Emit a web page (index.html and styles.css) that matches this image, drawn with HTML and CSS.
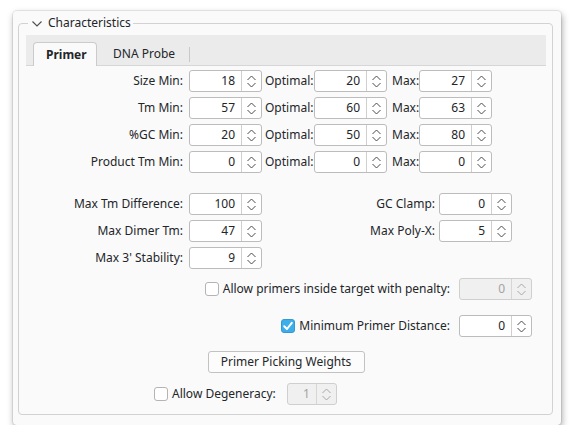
FILE: index.html
```html
<!DOCTYPE html>
<html>
<head>
<meta charset="utf-8">
<link rel="stylesheet" href="styles.css">
</head>
<body>
<svg class="defs" aria-hidden="true">
  <symbol id="ud" viewBox="0 0 9 13">
    <polyline points="0.5,5 4.5,1 8.5,5" fill="none" stroke="currentColor" stroke-width="1"/>
    <polyline points="0.5,8 4.5,12 8.5,8" fill="none" stroke="currentColor" stroke-width="1"/>
  </symbol>
</svg>
<div class="window">
  <fieldset class="group">
    <legend class="group-title"><svg class="chev" viewBox="0 0 10 6" width="10" height="6"><polyline points="0.5,0.5 5,5 9.5,0.5" fill="none" stroke="#4d4d4d" stroke-width="1.1"/></svg><span>Characteristics</span></legend>
    <div class="tabs">
      <div class="tabbar">
        <div class="tab active">Primer</div>
        <div class="tab">DNA Probe</div>
        <div class="tab-sep"></div>
      </div>
      <div class="pane">
        <div class="grid-a">
          <div class="lab">Size Min:</div>
          <div class="spin"><span class="val">18</span><span class="arr"><svg><use href="#ud"/></svg></span></div>
          <div class="lab-l">Optimal:</div>
          <div class="spin"><span class="val">20</span><span class="arr"><svg><use href="#ud"/></svg></span></div>
          <div class="lab-m">Max:</div>
          <div class="spin"><span class="val">27</span><span class="arr"><svg><use href="#ud"/></svg></span></div>

          <div class="lab">Tm Min:</div>
          <div class="spin"><span class="val">57</span><span class="arr"><svg><use href="#ud"/></svg></span></div>
          <div class="lab-l">Optimal:</div>
          <div class="spin"><span class="val">60</span><span class="arr"><svg><use href="#ud"/></svg></span></div>
          <div class="lab-m">Max:</div>
          <div class="spin"><span class="val">63</span><span class="arr"><svg><use href="#ud"/></svg></span></div>

          <div class="lab">%GC Min:</div>
          <div class="spin"><span class="val">20</span><span class="arr"><svg><use href="#ud"/></svg></span></div>
          <div class="lab-l">Optimal:</div>
          <div class="spin"><span class="val">50</span><span class="arr"><svg><use href="#ud"/></svg></span></div>
          <div class="lab-m">Max:</div>
          <div class="spin"><span class="val">80</span><span class="arr"><svg><use href="#ud"/></svg></span></div>

          <div class="lab">Product Tm Min:</div>
          <div class="spin"><span class="val">0</span><span class="arr"><svg><use href="#ud"/></svg></span></div>
          <div class="lab-l">Optimal:</div>
          <div class="spin"><span class="val">0</span><span class="arr"><svg><use href="#ud"/></svg></span></div>
          <div class="lab-m">Max:</div>
          <div class="spin"><span class="val">0</span><span class="arr"><svg><use href="#ud"/></svg></span></div>
        </div>

        <div class="grid-b">
          <div class="lab">Max Tm Difference:</div>
          <div class="spin"><span class="val">100</span><span class="arr"><svg><use href="#ud"/></svg></span></div>
          <div class="lab-r">GC Clamp:</div>
          <div class="spin"><span class="val">0</span><span class="arr"><svg><use href="#ud"/></svg></span></div>

          <div class="lab">Max Dimer Tm:</div>
          <div class="spin"><span class="val">47</span><span class="arr"><svg><use href="#ud"/></svg></span></div>
          <div class="lab-r">Max Poly-X:</div>
          <div class="spin"><span class="val">5</span><span class="arr"><svg><use href="#ud"/></svg></span></div>

          <div class="lab">Max 3' Stability:</div>
          <div class="spin"><span class="val">9</span><span class="arr"><svg><use href="#ud"/></svg></span></div>
        </div>

        <div class="check-row first">
          <span class="cb"></span>
          <span class="cb-label">Allow primers inside target with penalty:</span>
          <div class="spin disabled"><span class="val">0</span><span class="arr"><svg><use href="#ud"/></svg></span></div>
        </div>

        <div class="check-row second">
          <span class="cb checked"><svg viewBox="0 0 14 14" width="14" height="14"><polyline points="3.2,7.2 6,10 10.8,3.8" fill="none" stroke="#fff" stroke-width="2" stroke-linecap="round" stroke-linejoin="round"/></svg></span>
          <span class="cb-label">Minimum Primer Distance:</span>
          <div class="spin"><span class="val">0</span><span class="arr"><svg><use href="#ud"/></svg></span></div>
        </div>

        <div class="btn-row">
          <button class="btn">Primer Picking Weights</button>
        </div>

        <div class="degen-row">
          <span class="cb"></span>
          <span class="cb-label">Allow Degeneracy:</span>
          <div class="spin small disabled"><span class="val">1</span><span class="arr"><svg><use href="#ud"/></svg></span></div>
        </div>
      </div>
    </div>
  </fieldset>
</div>
</body>
</html>
```

FILE: styles.css
```css
html, body {
  margin: 0;
  padding: 0;
  background: #ffffff;
}
body {
  padding: 11px 0 0 13px;
  font-family: "Noto Sans", "DejaVu Sans", sans-serif;
  font-size: 12px;
  color: #232629;
}
.defs {
  position: absolute;
  width: 0;
  height: 0;
  overflow: hidden;
}
.window {
  box-sizing: border-box;
  width: 548px;
  height: 414px;
  padding: 4px 8px 0 5px;
  background: #fafafa;
  border-radius: 4px;
  box-shadow: 0 0 0 1px rgba(0,0,0,0.07), 1px 3px 7px rgba(0,0,0,0.35);
}
.group {
  margin: 0;
  padding: 4px 6px 9px 7px;
  border: 1px solid #d2d2d2;
  border-radius: 4px;
  min-width: 0;
}
.group-title {
  margin-left: 2px;
  padding: 0 2px 0 4px;
  line-height: 16px;
  height: 16px;
  display: flex;
  align-items: center;
}
.chev {
  display: block;
  margin-right: 6px;
  margin-top: 1px;
}
.tabs {
  width: 520px;
}
.tabbar {
  height: 31px;
  background: #ebebeb;
  display: flex;
  align-items: flex-end;
  box-shadow: inset 0 -1px 0 #d6d6d6;
}
.tab {
  box-sizing: border-box;
  height: 24px;
  line-height: 24px;
  padding: 0 14px 0 16px;
}
.tab.active {
  width: 64px;
  margin-left: 7px;
  padding: 0 0 0 12px;
  font-weight: bold;
  background: #fafafa;
  border: 1px solid #cbcbcb;
  border-bottom: none;
  border-radius: 4px 4px 0 0;
  line-height: 23px;
}
.tab-sep {
  width: 1px;
  height: 15px;
  background: #c9c9c9;
  margin-bottom: 4px;
}
.pane {
  padding-top: 4px;
}
.grid-a {
  display: grid;
  grid-template-columns: 163px 73px 52px 73px 32px 73px;
  grid-auto-rows: 22px;
  row-gap: 5px;
}
.grid-b {
  margin-top: 20px;
  display: grid;
  grid-template-columns: 163px 73px 177px 73px;
  grid-auto-rows: 22px;
  row-gap: 5px;
}
.lab, .lab-l, .lab-m, .lab-r {
  line-height: 22px;
  white-space: nowrap;
}
.lab {
  text-align: right;
  padding-right: 6px;
}
.lab-l {
  padding-left: 3px;
}
.lab-m {
  padding-left: 5px;
}
.lab-r {
  text-align: right;
  padding-right: 4px;
}
.spin {
  box-sizing: border-box;
  width: 73px;
  height: 22px;
  display: flex;
  border: 1px solid #bcbcbc;
  border-radius: 3px;
  background: #ffffff;
}
.spin .val {
  flex: 1;
  text-align: right;
  padding-right: 6px;
  line-height: 20px;
}
.spin .arr {
  box-sizing: border-box;
  width: 20px;
  border-left: 1px solid #cfcfcf;
  display: flex;
  align-items: center;
  justify-content: center;
  color: #4a4a4a;
}
.spin .arr svg {
  width: 9px;
  height: 13px;
  display: block;
}
.spin.disabled {
  background: #f0f0f0;
  border-color: #cfcfcf;
  color: #a3a3a3;
}
.spin.disabled .arr {
  color: #a8a8a8;
  border-left-color: #d6d6d6;
}
.spin.small {
  width: 50px;
}
.check-row {
  display: flex;
  justify-content: flex-end;
  align-items: center;
  height: 22px;
  padding-right: 14px;
}
.check-row.first {
  margin-top: 9px;
}
.check-row.second {
  margin-top: 15px;
}
.cb {
  box-sizing: border-box;
  width: 14px;
  height: 14px;
  border: 1px solid #b4b4b4;
  border-radius: 3px;
  background: #ffffff;
  margin-right: 4px;
  display: block;
  flex: none;
}
.cb.checked {
  background: #3daee9;
  border-color: #3598d0;
  position: relative;
}
.cb.checked svg {
  display: block;
  margin: -1px;
}
.cb-label {
  line-height: 22px;
  margin-right: 9px;
  white-space: nowrap;
}
.btn-row {
  margin-top: 14px;
  display: flex;
  justify-content: center;
}
.btn {
  box-sizing: border-box;
  width: 157px;
  height: 22px;
  padding: 0;
  font-family: inherit;
  font-size: 12px;
  color: #232629;
  background: #fcfcfc;
  border: 1px solid #c2c2c2;
  border-radius: 3px;
  line-height: 20px;
}
.degen-row {
  margin-top: 10px;
  display: flex;
  align-items: center;
  height: 22px;
  padding-left: 128px;
}
.degen-row .cb-label {
  margin-right: 11px;
}
```
